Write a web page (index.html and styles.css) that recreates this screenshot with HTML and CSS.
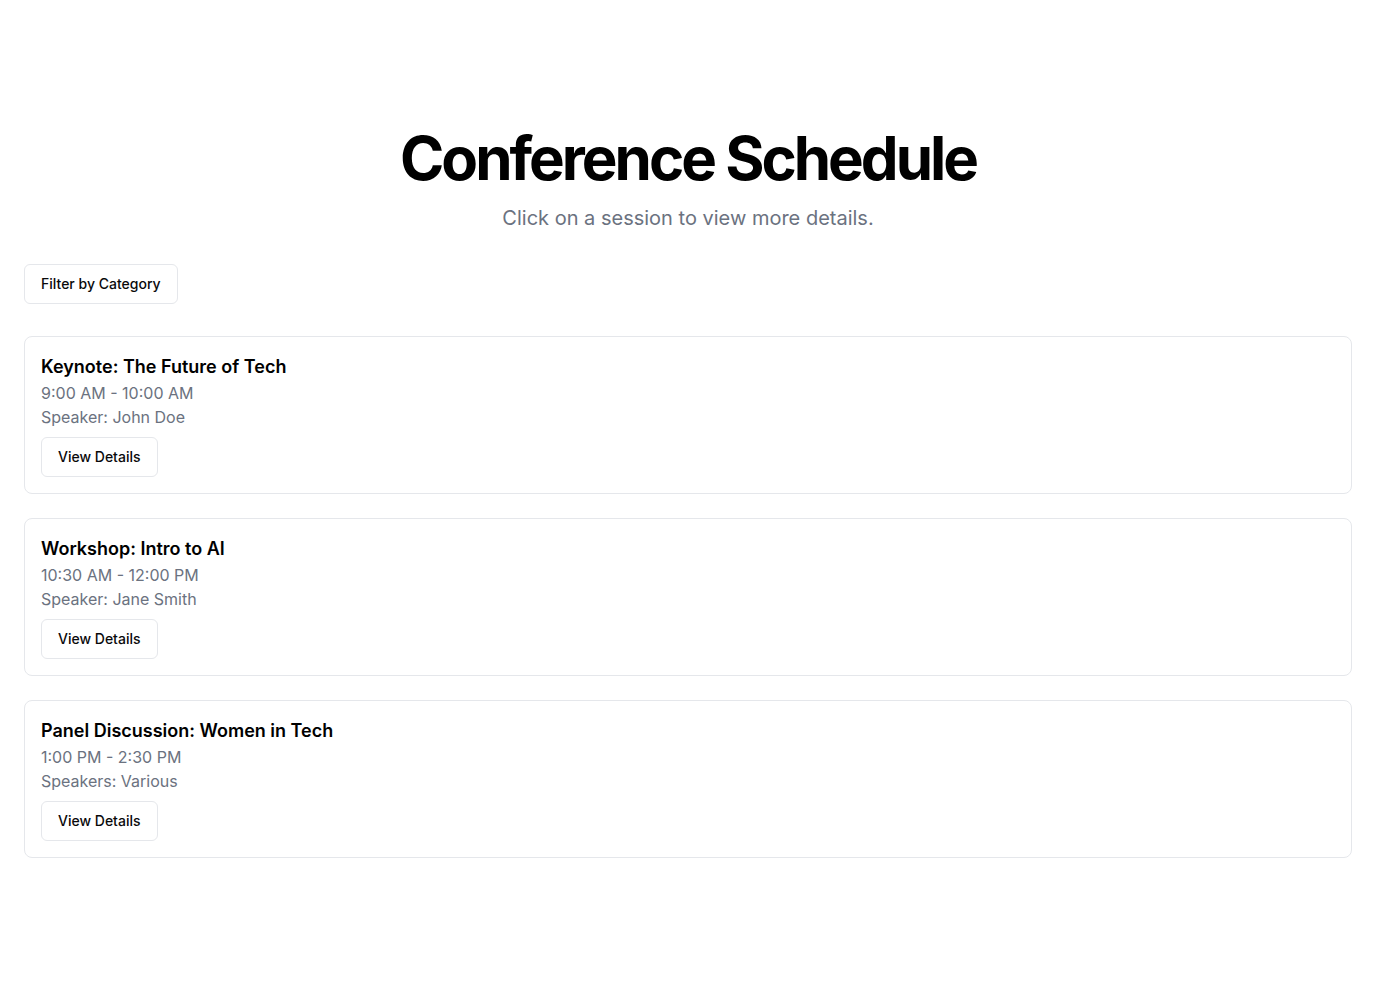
FILE: index.html
```html
<!DOCTYPE html>
<html lang="en">
<head>
<meta charset="utf-8">
<title>Conference Schedule</title>
<link rel="stylesheet" href="styles.css">
</head>
<body>
<main class="page">
  <header class="hero">
    <h1 class="hero-title">Conference Schedule</h1>
    <p class="hero-sub">Click on a session to view more details.</p>
  </header>
  <div class="toolbar">
    <button class="btn">Filter by Category</button>
  </div>
  <section class="sessions">
    <article class="card">
      <h2 class="card-title">Keynote: The Future of Tech</h2>
      <p class="card-meta">9:00 AM - 10:00 AM</p>
      <p class="card-meta">Speaker: John Doe</p>
      <button class="btn card-btn">View Details</button>
    </article>
    <article class="card">
      <h2 class="card-title">Workshop: Intro to AI</h2>
      <p class="card-meta">10:30 AM - 12:00 PM</p>
      <p class="card-meta">Speaker: Jane Smith</p>
      <button class="btn card-btn">View Details</button>
    </article>
    <article class="card">
      <h2 class="card-title">Panel Discussion: Women in Tech</h2>
      <p class="card-meta">1:00 PM - 2:30 PM</p>
      <p class="card-meta">Speakers: Various</p>
      <button class="btn card-btn">View Details</button>
    </article>
  </section>
</main>
</body>
</html>
```
FILE: styles.css
```css
* { box-sizing: border-box; }
html, body { margin: 0; padding: 0; background: #fff; }
body {
  font-family: Inter, "Noto Sans", "Liberation Sans", sans-serif;
  color: #09090b;
}
.page {
  padding: 0 24px 48px;
}
.hero {
  padding-top: 128px;
  text-align: center;
}
.hero-title {
  margin: 0;
  font-size: 60px;
  line-height: 60px;
  font-weight: 700;
  letter-spacing: -0.05em;
  color: #000;
}
.hero-sub {
  margin: 16px 0 0;
  font-size: 20px;
  line-height: 28px;
  color: #6b7280;
}
.toolbar {
  margin-top: 32px;
  display: flex;
}
.btn {
  font-family: inherit;
  font-size: 14px;
  font-weight: 500;
  line-height: 20px;
  color: #09090b;
  background: #fff;
  border: 1px solid #e5e7eb;
  border-radius: 6px;
  height: 40px;
  padding: 0 16px;
  cursor: pointer;
}
.sessions {
  margin-top: 32px;
  display: flex;
  flex-direction: column;
  gap: 24px;
}
.card {
  border: 1px solid #e5e7eb;
  border-radius: 8px;
  padding: 16px;
  display: flex;
  flex-direction: column;
  align-items: flex-start;
}
.card-title {
  margin: 0;
  font-size: 18px;
  line-height: 28px;
  font-weight: 600;
  color: #000;
}
.card-meta {
  margin: 0;
  font-size: 16px;
  line-height: 24px;
  color: #6b7280;
}
.card-btn {
  margin-top: 8px;
}
```
